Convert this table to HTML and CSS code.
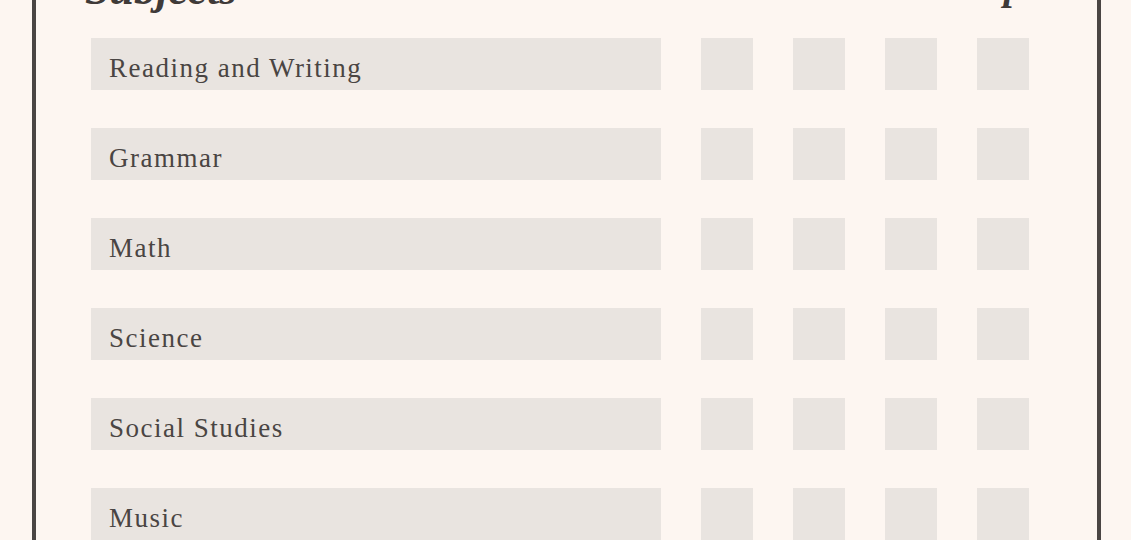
FILE: index.html
```html
<!DOCTYPE html>
<html lang="en">
<head>
<meta charset="utf-8">
<title>Report Card</title>
<link rel="stylesheet" href="styles.css">
</head>
<body>
<div class="sheet">
  <div class="grid">
    <div class="head head-subject">Subjects</div>
    <div class="head">Oct</div>
    <div class="head">Dec</div>
    <div class="head">Jan</div>
    <div class="head">Apr</div>

    <div class="subject">Reading and Writing</div>
    <div class="cell"></div><div class="cell"></div><div class="cell"></div><div class="cell"></div>

    <div class="subject">Grammar</div>
    <div class="cell"></div><div class="cell"></div><div class="cell"></div><div class="cell"></div>

    <div class="subject">Math</div>
    <div class="cell"></div><div class="cell"></div><div class="cell"></div><div class="cell"></div>

    <div class="subject">Science</div>
    <div class="cell"></div><div class="cell"></div><div class="cell"></div><div class="cell"></div>

    <div class="subject">Social Studies</div>
    <div class="cell"></div><div class="cell"></div><div class="cell"></div><div class="cell"></div>

    <div class="subject">Music</div>
    <div class="cell"></div><div class="cell"></div><div class="cell"></div><div class="cell"></div>
  </div>
</div>
</body>
</html>
```
FILE: styles.css
```css
html, body {
  margin: 0;
  padding: 0;
  background: #fdf6f1;
  overflow: hidden;
}

body {
  height: 540px;
  font-family: "Liberation Serif", "Times New Roman", serif;
  color: #4a4543;
}

.sheet {
  box-sizing: border-box;
  width: 1069px;
  margin: -72px 0 0 32px;
  border: 4px solid #4a4543;
  padding: 40px 0 60px 55px;
}

.grid {
  display: grid;
  grid-template-columns: 570px 52px 52px 52px 52px;
  column-gap: 40px;
  row-gap: 38px;
  grid-auto-rows: 52px;
  grid-template-rows: 28px;
}

.head {
  align-self: start;
  font-weight: bold;
  font-style: italic;
  font-size: 40px;
  line-height: 44px;
  height: 44px;
  text-align: center;
  white-space: nowrap;
  margin-top: -8px;
  color: #3f3a38;
}

.head-subject {
  text-align: left;
  font-size: 44px;
  margin-top: -4px;
  margin-left: -6px;
}

.subject {
  box-sizing: border-box;
  height: 52px;
  background: #e9e4e0;
  display: flex;
  align-items: center;
  padding: 9px 0 0 18px;
  font-size: 27px;
  letter-spacing: 1.5px;
  color: #4a4543;
  white-space: nowrap;
}

.cell {
  width: 52px;
  height: 52px;
  background: #e9e4e0;
}
```
